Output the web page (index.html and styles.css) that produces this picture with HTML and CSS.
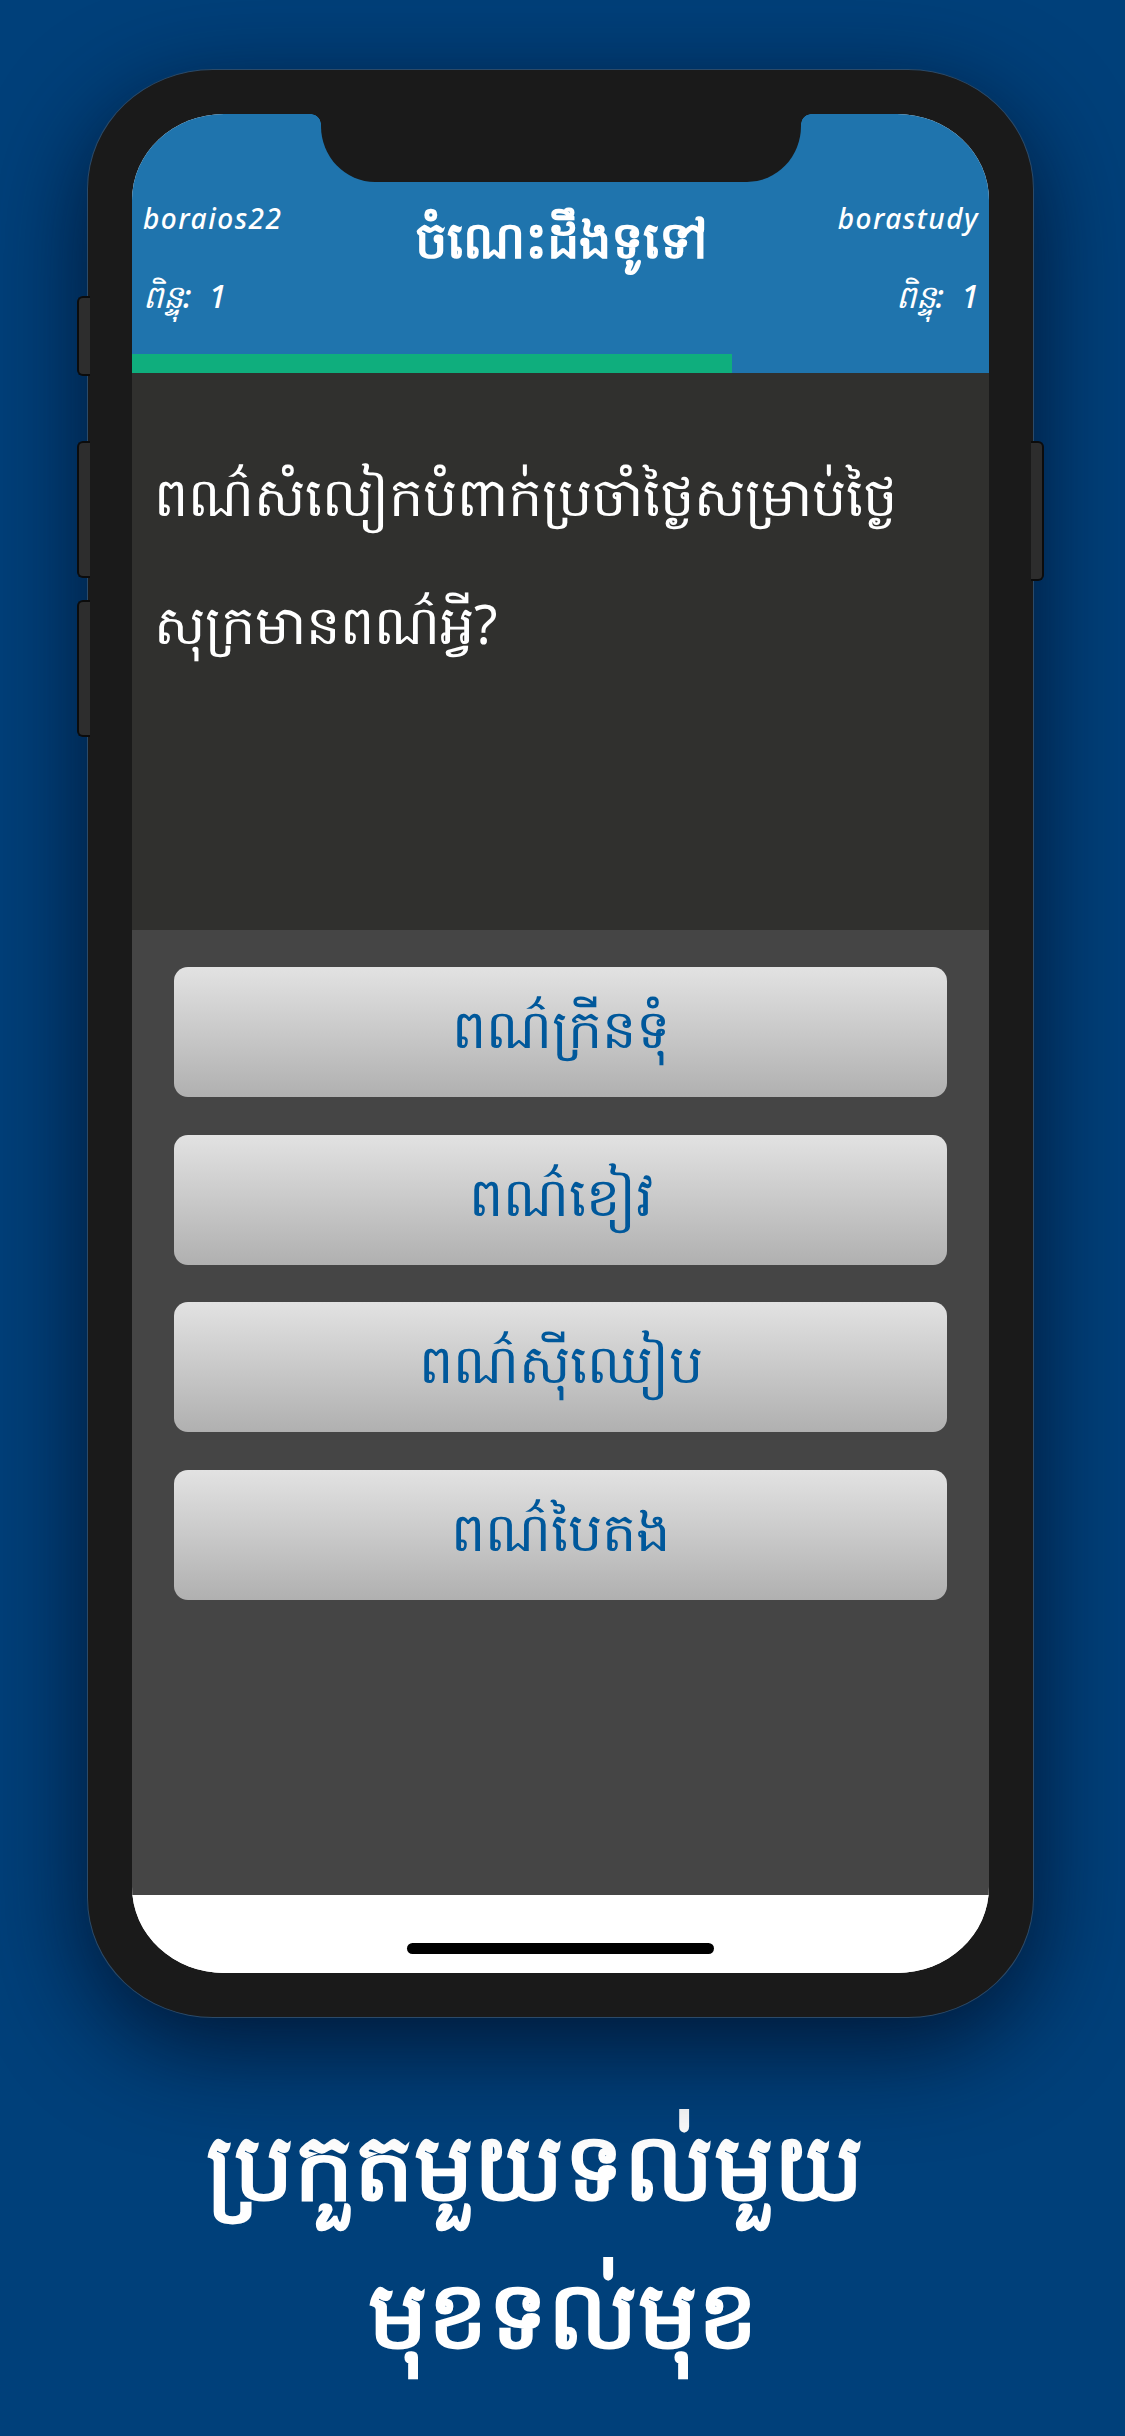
FILE: index.html
```html
<!DOCTYPE html>
<html lang="km">
<head>
    <meta charset="utf-8">
    <title>ប្រកួតមួយទល់មួយ</title>
    <link rel="stylesheet" href="styles.css">
</head>
<body>
    <div class="phone">
        <span class="side-btn side-mute"></span>
        <span class="side-btn side-up"></span>
        <span class="side-btn side-down"></span>
        <span class="side-btn side-power"></span>

        <div class="screen">
            <div class="notch"></div>

            <header class="top-bar">
                <div class="players">
                    <div class="player">
                        <span class="player-name">boraios22</span>
                        <span class="player-score">ពិន្ទុ: 1</span>
                    </div>
                    <h1 class="quiz-title">ចំណេះដឹងទូទៅ</h1>
                    <div class="player player-right">
                        <span class="player-name">borastudy</span>
                        <span class="player-score">ពិន្ទុ: 1</span>
                    </div>
                </div>
                <div class="progress"><div class="progress-fill" style="width: 70%"></div></div>
            </header>

            <section class="question">
                <p>ពណ៌សំលៀកបំពាក់ប្រចាំថ្ងៃសម្រាប់ថ្ងៃសុក្រមានពណ៌អ្វី?</p>
            </section>

            <section class="answers">
                <button class="answer" type="button">ពណ៌ក្រីនទុំ</button>
                <button class="answer" type="button">ពណ៌ខៀវ</button>
                <button class="answer" type="button">ពណ៌ស៊ីឈៀប</button>
                <button class="answer" type="button">ពណ៌បៃតង</button>
            </section>

            <div class="home-area"><span class="home-bar"></span></div>
        </div>
    </div>

    <h2 class="caption">
        <span class="caption-first">ប្រកួតមួយទល់មួយ</span>
        <span>មុខទល់មុខ</span>
    </h2>
</body>
</html>
```

FILE: styles.css
```css
* {
    box-sizing: border-box;
}

html, body {
    height: 100%;
}

body {
    margin: 0;
    width: 1125px;
    height: 2436px;
    overflow: hidden;
    padding-top: 69px;
    background-color: #00407a;
    font-family: "Noto Sans", "DejaVu Sans", sans-serif;
    color: #ffffff;
}

.phone {
    position: relative;
    width: 947px;
    height: 1949px;
    margin-left: 87px;
    padding: 44px;
    background-color: #1a1a1a;
    border: 1px solid #2b4a68;
    border-radius: 126px / 120px;
    box-shadow: 0 28px 100px rgba(0, 15, 40, 0.85);
}

.side-btn {
    position: absolute;
    width: 13px;
    background-color: #2d2d2d;
    border: 2px solid #0c0c0c;
}

.side-mute, .side-up, .side-down {
    left: -11px;
    border-right: none;
    border-radius: 6px 0 0 6px;
}

.side-mute {
    top: 226px;
    height: 80px;
}

.side-up {
    top: 371px;
    height: 137px;
}

.side-down {
    top: 530px;
    height: 137px;
}

.side-power {
    right: -11px;
    top: 371px;
    height: 140px;
    border-left: none;
    border-radius: 0 6px 6px 0;
}

.screen {
    position: relative;
    display: flex;
    flex-direction: column;
    height: 1859px;
    overflow: hidden;
    border-radius: 92px / 86px;
    background-color: #ffffff;
}

.notch {
    position: absolute;
    top: 0;
    left: 189px;
    width: 480px;
    height: 68px;
    background-color: #1a1a1a;
    border-radius: 0 0 54px 54px / 0 0 56px 56px;
}

.notch::before, .notch::after {
    content: "";
    position: absolute;
    top: 0;
    width: 10px;
    height: 10px;
}

.notch::before {
    left: -10px;
    background: radial-gradient(circle at 0 100%, transparent 9.5px, #1a1a1a 10px);
}

.notch::after {
    right: -10px;
    background: radial-gradient(circle at 100% 100%, transparent 9.5px, #1a1a1a 10px);
}

.top-bar {
    display: flex;
    flex-direction: column;
    justify-content: flex-end;
    height: 259px;
    flex-shrink: 0;
    background-color: #1f74ad;
}

.players {
    display: flex;
    justify-content: space-between;
    padding: 0 10px 30px 11px;
}

.player {
    display: flex;
    flex-direction: column;
    gap: 37px;
    width: 170px;
    font-size: 28px;
    font-style: italic;
    font-weight: 500;
}

.player-name {
    letter-spacing: 1.5px;
}

.player-score {
    font-size: 32px;
    word-spacing: 9px;
}

.player-right {
    align-items: flex-end;
}

.quiz-title {
    margin: 4px 0 0;
    font-size: 51px;
    font-weight: bold;
    text-align: center;
}

.progress {
    height: 19px;
}

.progress-fill {
    height: 100%;
    background-color: #0fae7d;
}

.question {
    height: 557px;
    flex-shrink: 0;
    padding: 58px 22px 0;
    background-color: #30302e;
}

.question p {
    margin: 0;
    font-size: 54px;
    line-height: 128px;
}

.answers {
    display: flex;
    flex-direction: column;
    gap: 37.5px;
    flex: 1;
    padding: 37px 42px 0;
    background-color: #454545;
}

.answer {
    height: 130px;
    border: none;
    border-radius: 14px;
    background: linear-gradient(#e2e2e2, #b0b0b0);
    color: #00589b;
    font-family: inherit;
    font-size: 54px;
    font-weight: 500;
}

.home-area {
    display: flex;
    justify-content: center;
    height: 78px;
    flex-shrink: 0;
    padding-top: 48px;
    background-color: #ffffff;
}

.home-bar {
    width: 307px;
    height: 11px;
    border-radius: 6px;
    background-color: #000000;
}

.caption {
    display: flex;
    flex-direction: column;
    align-items: center;
    margin: 72px 0 0;
    font-size: 94px;
    font-weight: bold;
    line-height: 148px;
}

.caption-first {
    padding-right: 56px;
}
```
